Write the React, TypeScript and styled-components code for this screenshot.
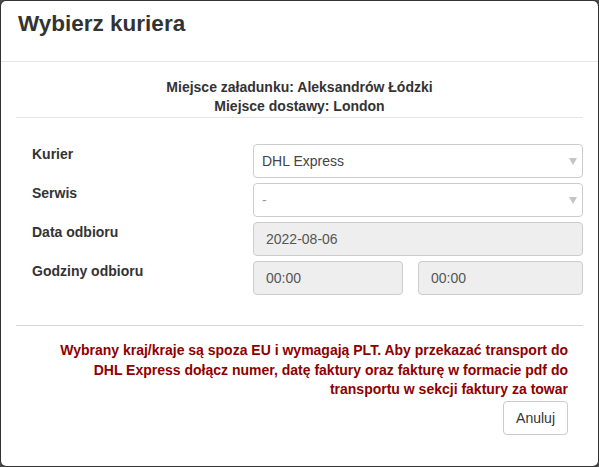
import * as React from "react";
import styled, { createGlobalStyle } from "styled-components";

const GlobalStyle = createGlobalStyle`
  html, body {
    margin: 0;
    padding: 0;
    background: #4a4a4a;
  }
  body {
    font-family: "Liberation Sans", Arial, Helvetica, sans-serif;
    font-size: 14px;
    line-height: 20px;
    color: #333;
  }
`;

const Modal = styled.div`
  box-sizing: border-box;
  width: 599px;
  height: 467px;
  background: #fff;
  background-clip: padding-box;
  border: 1px solid rgba(0, 0, 0, 0.3);
  border-radius: 6px;
  overflow: hidden;
`;

const Header = styled.div`
  height: 61px;
  padding: 8px 16px 0;
  box-sizing: border-box;
  border-bottom: 1px solid #e5e5e5;
`;

const Title = styled.h4`
  margin: 0;
  font-size: 22.5px;
  line-height: 30px;
  font-weight: bold;
  color: #333;
  padding-left: 1px;
`;

const Body = styled.div`
  padding: 16px 15px 0 15px;
`;

const Route = styled.div`
  text-align: center;
  font-weight: bold;
  line-height: 19px;
  padding-bottom: 1px;
  border-bottom: 1px solid #e5e5e5;
`;

const Form = styled.div`
  display: flex;
  flex-direction: column;
  gap: 5px;
  padding: 26px 0 30px 16px;
  border-bottom: 1px solid #d6d6d6;
`;

const Row = styled.div`
  display: grid;
  grid-template-columns: 205px 1fr;
  column-gap: 16px;
  align-items: start;
`;

const Label = styled.label`
  font-weight: bold;
  line-height: 20px;
  color: #333;
`;

const field = `
  box-sizing: border-box;
  width: 100%;
  height: 34px;
  border: 1px solid #ccc;
  border-radius: 4px;
  font-family: "Liberation Sans", Arial, Helvetica, sans-serif;
  font-size: 14px;
  color: #555;
  outline: none;
`;

const SelectWrap = styled.div`
  position: relative;
`;

const Select = styled.select<{ $muted?: boolean }>`
  ${field}
  appearance: none;
  -webkit-appearance: none;
  background: #fff;
  padding: 0 24px 0 8px;
  color: ${(p) => (p.$muted ? "#999" : "#444")};
`;

const Arrow = styled.span`
  position: absolute;
  right: 6px;
  top: 14px;
  width: 0;
  height: 0;
  border-left: 4px solid transparent;
  border-right: 4px solid transparent;
  border-top: 7px solid #c4c4c4;
  pointer-events: none;
`;

const Input = styled.input`
  ${field}
  background: #eee;
  padding: 0 12px;
`;

const TimePair = styled.div`
  display: grid;
  grid-template-columns: 150px 1fr;
  column-gap: 15px;
`;

const Footer = styled.div`
  display: flex;
  flex-direction: column;
  align-items: flex-end;
  padding: 15px 15px 0;
`;

const Warning = styled.p`
  margin: 0;
  text-align: right;
  font-weight: bold;
  color: #8f0000;
  line-height: 19.7px;
`;

const Button = styled.button`
  box-sizing: border-box;
  height: 34px;
  padding: 0 12px;
  margin-top: 1px;
  background: #fff;
  border: 1px solid #ccc;
  border-radius: 4px;
  font-family: "Liberation Sans", Arial, Helvetica, sans-serif;
  font-size: 14px;
  color: #333;
  cursor: pointer;
`;

export default function App() {
  return (
    <>
      <GlobalStyle />
      <Modal>
        <Header>
          <Title>Wybierz kuriera</Title>
        </Header>
        <Body>
          <Route>
            Miejsce załadunku: Aleksandrów Łódzki
            <br />
            Miejsce dostawy: London
          </Route>
          <Form>
            <Row>
              <Label>Kurier</Label>
              <SelectWrap>
                <Select defaultValue="dhl">
                  <option value="dhl">DHL Express</option>
                </Select>
                <Arrow />
              </SelectWrap>
            </Row>
            <Row>
              <Label>Serwis</Label>
              <SelectWrap>
                <Select $muted defaultValue="-">
                  <option value="-">-</option>
                </Select>
                <Arrow />
              </SelectWrap>
            </Row>
            <Row>
              <Label>Data odbioru</Label>
              <Input disabled value="2022-08-06" readOnly />
            </Row>
            <Row>
              <Label>Godziny odbioru</Label>
              <TimePair>
                <Input disabled value="00:00" readOnly />
                <Input disabled value="00:00" readOnly />
              </TimePair>
            </Row>
          </Form>
          <Footer>
            <Warning>
              Wybrany kraj/kraje są spoza EU i wymagają PLT. Aby przekazać transport do
              <br />
              DHL Express dołącz numer, datę faktury oraz fakturę w formacie pdf do
              <br />
              transportu w sekcji faktury za towar
            </Warning>
            <Button>Anuluj</Button>
          </Footer>
        </Body>
      </Modal>
    </>
  );
}
